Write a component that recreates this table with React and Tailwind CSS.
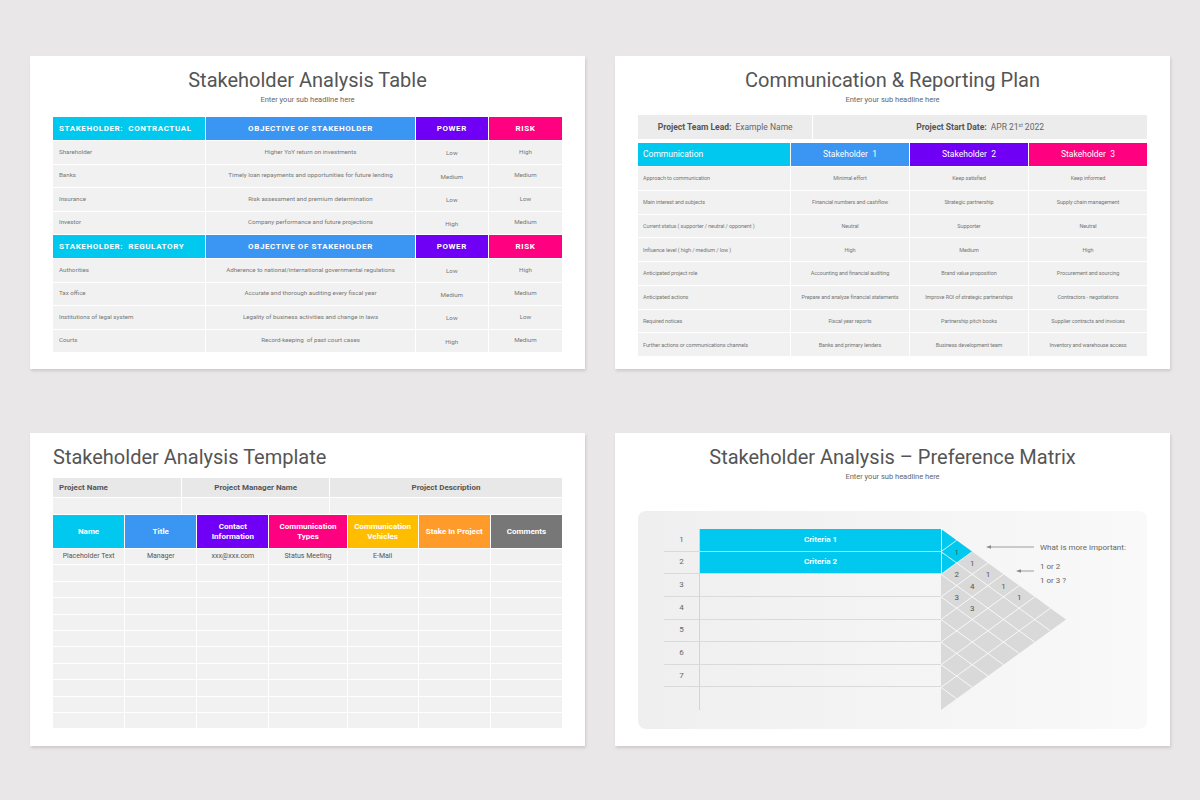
import React from "react";

const contractual = [
  ["Shareholder", "Higher YoY return on investments", "Low", "High"],
  ["Banks", "Timely loan repayments and opportunities for future lending", "Medium", "Medium"],
  ["Insurance", "Risk assessment and premium determination", "Low", "Low"],
  ["Investor", "Company performance and future projections", "High", "Medium"],
];

const regulatory = [
  ["Authorities", "Adherence to national/international governmental regulations", "Low", "High"],
  ["Tax office", "Accurate and thorough auditing every fiscal year", "Medium", "Medium"],
  ["Institutions of legal system", "Legality of business activities and change in laws", "Low", "Low"],
  ["Courts", "Record-keeping  of past court cases", "High", "Medium"],
];

const commRows = [
  ["Approach to communication", "Minimal effort", "Keep satisfied", "Keep informed"],
  ["Main interest and subjects", "Financial numbers and cashflow", "Strategic partnership", "Supply chain management"],
  ["Current status ( supporter / neutral / opponent )", "Neutral", "Supporter", "Neutral"],
  ["Influence level ( high / medium / low )", "High", "Medium", "High"],
  ["Anticipated project role", "Accounting and financial auditing", "Brand value proposition", "Procurement and sourcing"],
  ["Anticipated actions", "Prepare and analyze financial statements", "Improve ROI of strategic partnerships", "Contractors - negotiations"],
  ["Required notices", "Fiscal year reports", "Partnership pitch books", "Supplier contracts and invoices"],
  ["Further actions or communications channels", "Banks and primary lenders", "Business development team", "Inventory and warehouse access"],
];

const templateHead = [
  { label: ["Name"], bg: "bg-[#00c8ef]" },
  { label: ["Title"], bg: "bg-[#3a95f3]" },
  { label: ["Contact", "Information"], bg: "bg-[#7000f5]" },
  { label: ["Communication", "Types"], bg: "bg-[#ff0081]" },
  { label: ["Communication", "Vehicles"], bg: "bg-[#ffbd00]" },
  { label: ["Stake In Project"], bg: "bg-[#ff9b2b]" },
  { label: ["Comments"], bg: "bg-[#777777]" },
];

const templateData = ["Placeholder Text", "Manager", "xxx@xxx.com", "Status Meeting", "E-Mail", "", ""];

function Card({ children }) {
  return (
    <div className="w-[555px] h-[313px] bg-white shadow-[1px_2px_3px_rgba(0,0,0,0.13)]">
      {children}
    </div>
  );
}

function SlideTitle({ title, sub }) {
  return (
    <div className="pt-[11px] text-center">
      <h2 className="text-[20px] leading-[26px] text-[#555]">{title}</h2>
      <p className="mt-[1px] text-[7.5px] leading-[12px] text-[#666]">{sub}</p>
    </div>
  );
}

function StakeBlock({ heading, rows }) {
  return (
    <>
      <div className="h-[23px] flex items-center pl-[6px] bg-[#00c8ef] text-white text-[8px] font-bold tracking-[0.6px] whitespace-pre">
        {heading}
      </div>
      <div className="h-[23px] flex items-center justify-center bg-[#3a95f3] text-white text-[8px] font-bold tracking-[0.6px]">
        OBJECTIVE OF STAKEHOLDER
      </div>
      <div className="h-[23px] flex items-center justify-center bg-[#7000f5] text-white text-[8px] font-bold tracking-[0.6px]">
        POWER
      </div>
      <div className="h-[23px] flex items-center justify-center bg-[#ff0081] text-white text-[8px] font-bold tracking-[0.6px]">
        RISK
      </div>
      {rows.map((r) => (
        <React.Fragment key={r[0]}>
          <div className="h-[22.5px] flex items-center pl-[6px] bg-[#f1f1f1] text-[6.2px] text-[#777]">{r[0]}</div>
          <div className="h-[22.5px] flex items-center justify-center bg-[#f1f1f1] text-[6.2px] text-[#777] whitespace-pre">{r[1]}</div>
          <div className="h-[22.5px] flex items-center justify-center pt-[3px] bg-[#f1f1f1] text-[6.2px] text-[#777]">{r[2]}</div>
          <div className="h-[22.5px] flex items-center justify-center bg-[#f1f1f1] text-[6.2px] text-[#777]">{r[3]}</div>
        </React.Fragment>
      ))}
    </>
  );
}

function AnalysisTable() {
  return (
    <Card>
      <SlideTitle title="Stakeholder Analysis Table" sub="Enter your sub headline here" />
      <div className="mx-[23px] mt-[11px] grid grid-cols-[152fr_208fr_72fr_73fr] gap-px">
        <StakeBlock heading="STAKEHOLDER:  CONTRACTUAL" rows={contractual} />
        <StakeBlock heading="STAKEHOLDER:  REGULATORY" rows={regulatory} />
      </div>
    </Card>
  );
}

function ReportingPlan() {
  return (
    <Card>
      <SlideTitle title="Communication & Reporting Plan" sub="Enter your sub headline here" />
      <div className="mx-[23px] mt-[9px] grid grid-cols-[174fr_333fr] gap-px text-[8.5px] text-[#666]">
        <div className="h-[24px] flex items-center justify-center gap-[4px] bg-[#ececec]">
          <span className="font-bold text-[#555]">Project Team Lead:</span>
          <span>Example Name</span>
        </div>
        <div className="h-[24px] flex items-center justify-center gap-[4px] bg-[#ececec]">
          <span className="font-bold text-[#555]">Project Start Date:</span>
          <span>
            APR 21<sup className="text-[5px]">st</sup> 2022
          </span>
        </div>
      </div>
      <div className="mx-[23px] mt-[4px] grid grid-cols-[152fr_118fr_118fr_118fr] gap-px">
        <div className="h-[23px] flex items-center pl-[5px] bg-[#00c8ef] text-white text-[8.5px]">Communication</div>
        <div className="h-[23px] flex items-center justify-center bg-[#3a95f3] text-white text-[8.5px] whitespace-pre">Stakeholder  1</div>
        <div className="h-[23px] flex items-center justify-center bg-[#7000f5] text-white text-[8.5px] whitespace-pre">Stakeholder  2</div>
        <div className="h-[23px] flex items-center justify-center bg-[#ff0081] text-white text-[8.5px] whitespace-pre">Stakeholder  3</div>
        {commRows.map((r) => (
          <React.Fragment key={r[0]}>
            <div className="h-[22.75px] flex items-center pl-[5px] bg-[#f1f1f1] text-[5.5px] text-[#777] tracking-[-0.1px]">{r[0]}</div>
            <div className="h-[22.75px] flex items-center justify-center bg-[#f1f1f1] text-[5.5px] text-[#777] tracking-[-0.1px]">{r[1]}</div>
            <div className="h-[22.75px] flex items-center justify-center bg-[#f1f1f1] text-[5.5px] text-[#777] tracking-[-0.1px]">{r[2]}</div>
            <div className="h-[22.75px] flex items-center justify-center bg-[#f1f1f1] text-[5.5px] text-[#777] tracking-[-0.1px]">{r[3]}</div>
          </React.Fragment>
        ))}
      </div>
    </Card>
  );
}

function AnalysisTemplate() {
  const empty = Array.from({ length: 10 });
  return (
    <Card>
      <h2 className="pt-[11px] px-[23px] text-[20px] leading-[26px] text-[#555]">Stakeholder Analysis Template</h2>
      <div className="mx-[23px] mt-[8px] grid grid-cols-[129fr_147fr_233fr] gap-px text-[8px] font-bold text-[#555]">
        <div className="h-[19px] flex items-center pl-[6px] bg-[#e8e8e8]">Project Name</div>
        <div className="h-[19px] flex items-center justify-center bg-[#e8e8e8]">Project Manager Name</div>
        <div className="h-[19px] flex items-center justify-center bg-[#e8e8e8]">Project Description</div>
        <div className="h-[16px] bg-[#f1f1f1]" />
        <div className="h-[16px] bg-[#f1f1f1]" />
        <div className="h-[16px] bg-[#f1f1f1]" />
      </div>
      <div className="mx-[23px] mt-px grid grid-cols-[72fr_72fr_72fr_78fr_71fr_72fr_72fr] gap-px">
        {templateHead.map((h) => (
          <div
            key={h.label.join(" ")}
            className={`h-[33px] flex flex-col items-center justify-center ${h.bg} text-white text-[8px] leading-[10px] font-bold text-center`}
          >
            {h.label.map((l) => (
              <span key={l}>{l}</span>
            ))}
          </div>
        ))}
        {templateData.map((d, i) => (
          <div key={i} className="h-[15.4px] flex items-center justify-center bg-[#f1f1f1] text-[7px] text-[#555]">
            {d}
          </div>
        ))}
        {empty.map((_, r) =>
          templateHead.map((h) => <div key={`${r}-${h.label[0]}`} className="h-[15.4px] bg-[#f1f1f1]" />)
        )}
      </div>
    </Card>
  );
}

const H = 181 / 8;
const S = 90.5 / 125;
const cellLabels = [
  [1, 2, "1"],
  [1, 3, "1"],
  [2, 3, "2"],
  [1, 4, "1"],
  [2, 4, "4"],
  [1, 5, "1"],
  [3, 4, "3"],
  [1, 6, "1"],
  [3, 5, "3"],
];

function MatrixTriangle() {
  const ks = [1, 2, 3, 4, 5, 6, 7];
  return (
    <svg width="200" height="181" viewBox="0 0 200 181" className="overflow-visible shrink-0">
      <polygon points="0,0 125,90.5 0,181" fill="#d9d9d9" />
      <polygon points={`0,0 ${H / S},${H} 0,${2 * H}`} fill="#00c8ef" />
      {ks.map((k) => (
        <line
          key={`d${k}`}
          x1="0"
          y1={k * H}
          x2={(181 - k * H) / (2 * S)}
          y2={(181 + k * H) / 2}
          stroke="#ffffff"
          strokeWidth="0.8"
        />
      ))}
      {ks.map((k) => (
        <line
          key={`u${k}`}
          x1="0"
          y1={k * H}
          x2={(k * H) / (2 * S)}
          y2={(k * H) / 2}
          stroke="#ffffff"
          strokeWidth="0.8"
        />
      ))}
      <line x1="0.5" y1="0" x2="0.5" y2={2 * H} stroke="#ffffff" strokeWidth="1" />
      {cellLabels.map(([i, j, t]) => (
        <text
          key={`${i}-${j}`}
          x={((j - i) * H) / (2 * S)}
          y={((i + j - 1) * H) / 2 + 3}
          textAnchor="middle"
          fontSize="8"
          fill="#555"
          fontFamily="Roboto, sans-serif"
        >
          {t}
        </text>
      ))}
      <line x1="49" y1="18" x2="93" y2="18" stroke="#888" strokeWidth="0.8" />
      <polygon points="45,18 50,16.2 50,19.8" fill="#888" />
      <line x1="79" y1="42" x2="93" y2="42" stroke="#888" strokeWidth="0.8" />
      <polygon points="75,42 80,40.2 80,43.8" fill="#888" />
      <text x="99" y="21" fontSize="8" fill="#666" fontFamily="Roboto, sans-serif">
        What is more important:
      </text>
      <text x="99" y="40" fontSize="8" fill="#666" fontFamily="Roboto, sans-serif">
        1 or 2
      </text>
      <text x="99" y="54" fontSize="8" fill="#666" fontFamily="Roboto, sans-serif">
        1 or 3 ?
      </text>
    </svg>
  );
}

function PreferenceMatrix() {
  const rows = [1, 2, 3, 4, 5, 6, 7, 8];
  return (
    <Card>
      <SlideTitle title="Stakeholder Analysis – Preference Matrix" sub="Enter your sub headline here" />
      <div className="mx-[23px] mt-[28px] h-[218px] rounded-[8px] bg-linear-to-r from-[#efefef] to-[#f9f9f9] pt-[18px] pl-[26px] flex items-start">
        <div className="w-[277px] shrink-0">
          {rows.map((n) => (
            <div key={n} className={`h-[22.625px] flex ${n < 8 ? "border-b border-[#dadada]" : ""}`}>
              <div className="w-[36px] border-r border-[#d4d4d4] flex items-center justify-center text-[8px] text-[#666]">
                {n < 8 ? n : ""}
              </div>
              <div
                className={`flex-1 flex items-center justify-center text-[8px] font-bold text-white ${
                  n <= 2 ? "bg-[#00c8ef]" : ""
                }`}
              >
                {n <= 2 ? `Criteria ${n}` : ""}
              </div>
            </div>
          ))}
        </div>
        <MatrixTriangle />
      </div>
    </Card>
  );
}

export default function App() {
  return (
    <div className="w-full h-[800px] bg-[#e9e7e8] pt-[56px] pl-[30px] font-['Roboto',sans-serif]">
      <div className="grid grid-cols-[555px_555px] gap-x-[30px] gap-y-[64px]">
        <AnalysisTable />
        <ReportingPlan />
        <AnalysisTemplate />
        <PreferenceMatrix />
      </div>
    </div>
  );
}
